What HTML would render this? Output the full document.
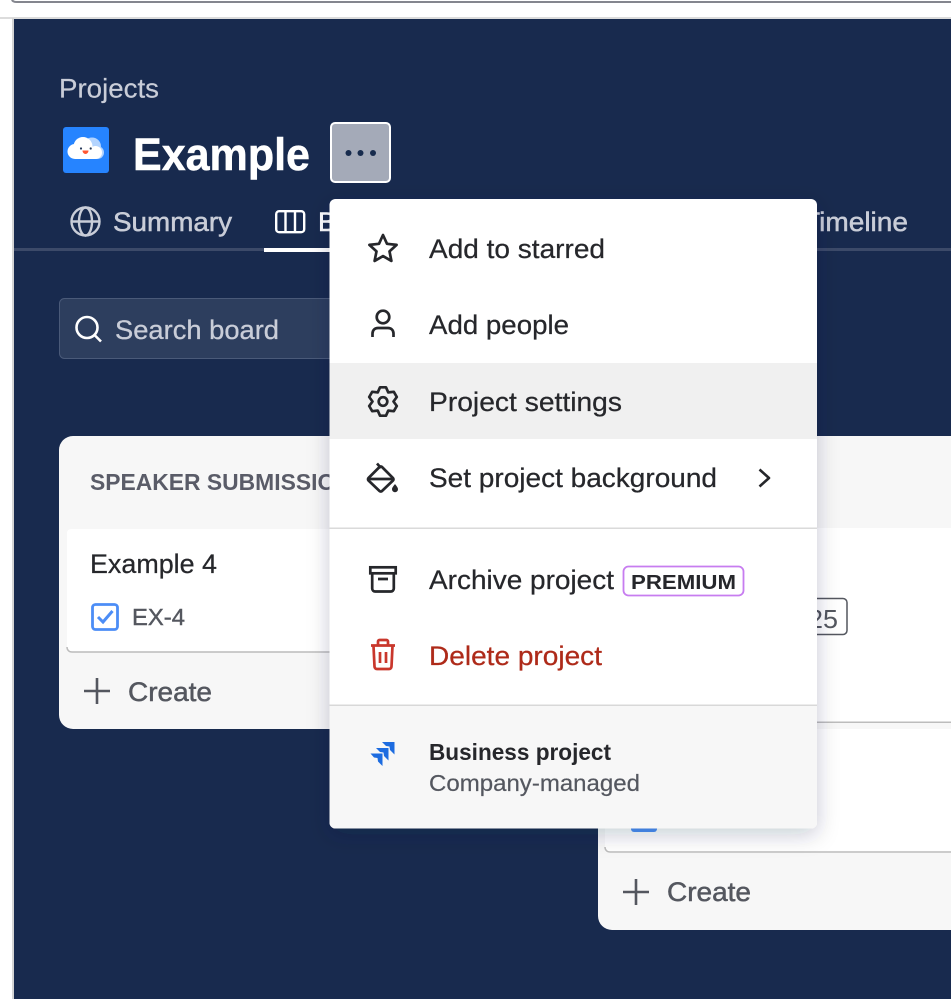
<!DOCTYPE html>
<html lang="en">
<head>
<meta charset="utf-8">
<title>Example</title>
<style>
html,body{margin:0;padding:0;background:#fff;width:951px;height:999px;overflow:hidden}
svg{display:block}
text{font-family:"Liberation Sans",sans-serif}
</style>
</head>
<body>
<svg width="951" height="999" viewBox="0 0 951 999" xmlns="http://www.w3.org/2000/svg">
<defs>
<filter id="menuShadow" x="-15%" y="-10%" width="130%" height="125%">
<feDropShadow dx="0" dy="6" stdDeviation="11" flood-color="#091e42" flood-opacity=".22"/>
</filter>
</defs>

<!-- browser chrome -->
<rect width="951" height="999" fill="#fff"/>
<path d="M12 -1c0 2 2 3 5 3H951" fill="none" stroke="#84868e" stroke-width="2"/>
<rect x="0" y="17" width="951" height="2" fill="#dcdcdc"/>
<rect x="12" y="18" width="2" height="981" fill="#d4d4d4"/>
<rect x="14" y="19" width="937" height="980" fill="#182a4e"/>

<!-- header -->
<text x="59" y="97.500" font-size="27" fill="#c9cdd8" stroke="#c9cdd8" stroke-width=".2" textLength="100" lengthAdjust="spacingAndGlyphs">Projects</text>
<rect x="63" y="127" width="46" height="46" rx="3" fill="#2684ff"/>
<g fill="#b3d4ff">
<circle cx="92" cy="146.500" r="9"/>
<circle cx="97.500" cy="152.500" r="6.500"/>
<rect x="85" y="150" width="12" height="9"/>
</g>
<g fill="#fff">
<circle cx="75" cy="151.500" r="7.500"/>
<circle cx="83" cy="146.500" r="9.500"/>
<circle cx="95.500" cy="152.500" r="6.500"/>
<rect x="75" y="149" width="20" height="10"/>
</g>
<circle cx="81" cy="148.500" r="1.100" fill="#253858"/>
<circle cx="90.700" cy="148.500" r="1.100" fill="#253858"/>
<path d="M82.500 150.500h6c0 2-1.500 3.500-3 3.500s-3-1.500-3-3.500z" fill="#ff5630"/>
<text x="133" y="170" font-size="45" font-weight="700" fill="#fff" stroke="#fff" stroke-width=".5" textLength="177" lengthAdjust="spacingAndGlyphs">Example</text>
<rect x="331" y="123" width="59" height="59" rx="4" fill="#a4aab8" stroke="#fff" stroke-width="2"/>
<circle cx="348.500" cy="153" r="3" fill="#172b4d"/>
<circle cx="360.500" cy="153" r="3" fill="#172b4d"/>
<circle cx="373" cy="153" r="3" fill="#172b4d"/>

<!-- tabs -->
<rect x="14" y="248" width="937" height="3" fill="#3c4a69"/>
<rect x="264" y="248" width="70" height="4" fill="#fff"/>
<g fill="none" stroke="#c9cdd8" stroke-width="2.400">
<circle cx="85.500" cy="221.500" r="14"/>
<ellipse cx="85.500" cy="221.500" rx="6.500" ry="14"/>
<path d="M72 221.500h27"/>
</g>
<text x="113" y="231" font-size="27" fill="#c9cdd8" stroke="#c9cdd8" stroke-width=".5" textLength="119" lengthAdjust="spacingAndGlyphs">Summary</text>
<g fill="none" stroke="#fff" stroke-width="2.400">
<rect x="276.200" y="211.200" width="28" height="21" rx="3"/>
<path d="M285.500 211v21M295 211v21"/>
</g>
<text x="318" y="231" font-size="27" fill="#fff" stroke="#fff" stroke-width=".5">Board</text>
<text x="803" y="231" font-size="27" fill="#c9cdd8" stroke="#c9cdd8" stroke-width=".5" textLength="105" lengthAdjust="spacingAndGlyphs">Timeline</text>

<!-- search -->
<rect x="59.500" y="298.500" width="360" height="60" rx="5" fill="#2d3e5e" stroke="#4a5a79"/>
<circle cx="87" cy="327.500" r="10.500" fill="none" stroke="#fff" stroke-width="2.600"/>
<path d="M94.500 335l6.500 6.500" stroke="#fff" stroke-width="2.600" fill="none"/>
<text x="115" y="339" font-size="27" fill="#c9cdd8" stroke="#c9cdd8" stroke-width=".3" textLength="164" lengthAdjust="spacingAndGlyphs">Search board</text>

<!-- left column -->
<rect x="59" y="436" width="380" height="293" rx="14" fill="#f7f7f7"/>
<text x="90" y="490" font-size="23" font-weight="700" fill="#5a5c68" textLength="277" lengthAdjust="spacingAndGlyphs">SPEAKER SUBMISSIONS</text>
<rect x="67" y="529" width="360" height="123" rx="4" fill="#fff"/>
<path d="M67 647c0 3 2 5 5 5H427" fill="none" stroke="#bcbcbc" stroke-width="1.500"/>
<text x="90" y="573" font-size="27" fill="#26272b" stroke="#26272b" stroke-width=".25" textLength="127" lengthAdjust="spacingAndGlyphs">Example 4</text>
<rect x="92.500" y="604.500" width="25" height="25" rx="3" fill="#fff" stroke="#4c8df6" stroke-width="2.800"/>
<path d="M98 617l5 5 9.500-11" fill="none" stroke="#4c8df6" stroke-width="3"/>
<text x="132" y="625" font-size="23" fill="#54575f" stroke="#54575f" stroke-width=".4" textLength="53" lengthAdjust="spacingAndGlyphs">EX-4</text>
<path d="M97 678v26M84 691h26" stroke="#54575f" stroke-width="2.600" fill="none"/>
<text x="128" y="701" font-size="27" fill="#54575f" stroke="#54575f" stroke-width=".5" textLength="84" lengthAdjust="spacingAndGlyphs">Create</text>

<!-- right column -->
<rect x="598" y="436" width="400" height="494" rx="14" fill="#f7f7f7"/>
<rect x="605" y="528" width="360" height="195" rx="4" fill="#fff"/>
<rect x="605" y="721.500" width="346" height="1.500" fill="#bcbcbc"/>
<rect x="605" y="729" width="360" height="124" rx="4" fill="#fff"/>
<path d="M605 847c0 3 2 5 5 5H951" fill="none" stroke="#bcbcbc" stroke-width="1.500"/>
<rect x="631" y="806" width="26" height="26" rx="3" fill="#4c8df6"/>
<rect x="770" y="598.500" width="77" height="36" rx="4" fill="#fff" stroke="#54575f" stroke-width="1.500"/>
<text x="808" y="628" font-size="26" fill="#54575f" textLength="30" lengthAdjust="spacingAndGlyphs">25</text>
<path d="M636 879v26M623 892h26" stroke="#54575f" stroke-width="2.600" fill="none"/>
<text x="667" y="901" font-size="27" fill="#54575f" stroke="#54575f" stroke-width=".5" textLength="84" lengthAdjust="spacingAndGlyphs">Create</text>

<!-- menu -->
<rect x="329.500" y="199" width="487.500" height="629.500" rx="6" fill="#fff" filter="url(#menuShadow)"/>
<rect x="329.500" y="363" width="487.500" height="76" fill="#f0f0f0"/>
<rect x="329.500" y="527.500" width="487.500" height="1.500" fill="#dadada"/>
<path d="M329.500 705h487.500v117.500a6 6 0 0 1-6 6H335.500a6 6 0 0 1-6-6z" fill="#f7f7f7"/>
<rect x="329.500" y="704.500" width="487.500" height="1.500" fill="#d8d8d8"/>

<g fill="none" stroke="#26272b" stroke-width="2.700" stroke-linejoin="round">
<!-- star -->
<path d="M383 235l4 8.800 9.600 1.100-7.100 6.500 1.900 9.500-8.400-4.800-8.400 4.800 1.900-9.500-7.100-6.500 9.600-1.100z"/>
<!-- person -->
<circle cx="383" cy="317" r="6.300"/>
<path d="M372.500 337v-3.500c0-3.500 2.500-5.500 5.500-5.500h10c3 0 5.500 2 5.500 5.500v3.500"/>
<!-- gear -->
<circle cx="383" cy="401.500" r="4.300"/>
<path d="M380 387.300h6l2.250 5.100 5.550-.6 3 5.200-3.300 4.500 3.300 4.500-3 5.200-5.550-.6-2.250 5.100h-6l-2.250-5.100-5.550.6-3-5.200 3.300-4.500-3.300-4.500 3-5.200 5.550.6z"/>
<!-- bucket -->
<path d="M379.500 467l-11 11a1.800 1.800 0 0 0 0 2.500l11 10.500a1.800 1.800 0 0 0 2.500 0l11-10.500a1.800 1.800 0 0 0 0-2.500l-11-11a1.800 1.800 0 0 0-2.500 0z"/>
<path d="M377 463.500l4 4.500M368 479h26"/>
<!-- archive -->
<rect x="370.300" y="567.300" width="25.400" height="6" stroke-linejoin="miter"/>
<path d="M372.200 573v15.500a3 3 0 0 0 3 3h15.600a3 3 0 0 0 3-3V573M378 579h10"/>
<!-- chevron -->
<path d="M759.500 469.500l9.500 8.500-9.500 8.500" stroke-width="2.600"/>
</g>
<path d="M395 484c1.500 2 3 3.500 3 5.200a3 3 0 0 1-6 0c0-1.700 1.500-3.200 3-5.200z" fill="#26272b"/>
<!-- trash -->
<g fill="none" stroke="#c9372c" stroke-width="2.700">
<path d="M371 645.500h24M378 645v-3.500a1.500 1.500 0 0 1 1.500-1.500h7a1.500 1.500 0 0 1 1.500 1.500v3.500"/>
<path d="M373.500 646l1 20.500a2.500 2.500 0 0 0 2.500 2.500h12a2.500 2.500 0 0 0 2.500-2.500l1-20.500M380 652v11M386 652v11"/>
</g>
<!-- jira -->
<path d="M382 742h12.500v12.500l-4.500-4.500-.5-3.500-3.500-.5z" fill="#1d6ce0"/>
<path d="M376 748h12.500v12.500l-4.500-4.500-.5-3.500-3.500-.5z" fill="#1d6ce0"/>
<path d="M370.500 753.500h12v12.500l-4.500-4.500-.5-3.500-3.500-.5z" fill="#1d6ce0"/>

<g font-size="27" fill="#26272b" stroke="#26272b" stroke-width=".25">
<text x="429" y="258" textLength="176" lengthAdjust="spacingAndGlyphs">Add to starred</text>
<text x="429" y="334" textLength="140" lengthAdjust="spacingAndGlyphs">Add people</text>
<text x="429" y="411" textLength="193" lengthAdjust="spacingAndGlyphs">Project settings</text>
<text x="429" y="487" textLength="288" lengthAdjust="spacingAndGlyphs">Set project background</text>
<text x="429" y="589" textLength="185" lengthAdjust="spacingAndGlyphs">Archive project</text>
<text x="429" y="665" fill="#ae2a19" stroke="#ae2a19" textLength="173" lengthAdjust="spacingAndGlyphs">Delete project</text>
</g>
<rect x="623.500" y="566.500" width="120" height="29" rx="5" fill="#fff" stroke="#c77df0" stroke-width="1.800"/>
<text x="631" y="589" font-size="20" font-weight="700" fill="#26272b" textLength="105" lengthAdjust="spacingAndGlyphs">PREMIUM</text>
<text x="429" y="760" font-size="23" font-weight="700" fill="#26272b" textLength="182" lengthAdjust="spacingAndGlyphs">Business project</text>
<text x="429" y="791" font-size="23" fill="#54575f" stroke="#54575f" stroke-width=".2" textLength="211" lengthAdjust="spacingAndGlyphs">Company-managed</text>
</svg>
</body>
</html>
